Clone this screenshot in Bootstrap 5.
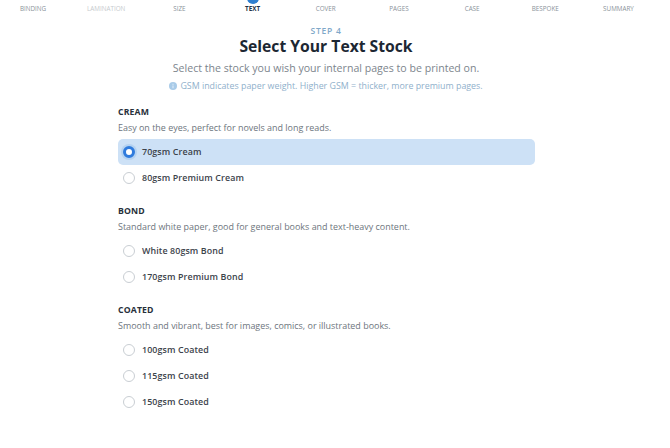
<!DOCTYPE html>
<html lang="en">
<head>
<meta charset="utf-8">
<title>Select Your Text Stock</title>
<link href="https://cdn.jsdelivr.net/npm/bootstrap@5.3.0/dist/css/bootstrap.min.css" rel="stylesheet">
<style>
html,body{height:448px;overflow:hidden}
body{font-family:"Open Sans","Noto Sans",sans-serif;background:#fff;color:#212b36}
.stepper-row{height:12px;width:670px;margin-left:-3.6px;position:relative}
.step-name{font-size:6.3px;color:#8a929a;text-transform:uppercase;line-height:12px;position:relative;flex:0 0 auto;width:73.2px;text-align:center;margin-top:3px}
.step-name.is-muted{color:#c6cace}
.step-name.is-current{color:#1f3247;font-weight:700}
.step-dot{position:absolute;left:50%;top:-11px;width:12px;height:12px;margin-left:-6px;border-radius:50%;background:#2f7fd0}
.intro{padding:14px 18px 0 0;text-align:center}
.step-kicker{font-size:8.5px;line-height:10px;height:10px;letter-spacing:.75px;font-weight:600;color:#7fa8c9;text-transform:uppercase}
.page-title{font-size:15.7px;line-height:18px;font-weight:700;color:#1c2733;margin:1px 0 0}
.page-sub{font-size:10.6px;line-height:15px;color:#7d858d;margin:5.5px 0 0}
.gsm-note{font-size:8.85px;line-height:14px;color:#8fb0cb;margin:3.5px 0 0}
.info-icon{width:8px;height:8px;vertical-align:-1px;margin-right:3px}
.stock-wrap{width:417px;margin:13px 0 0 118px}
.stock-group{margin-bottom:14px}
.stock-group h2{font-size:8.7px;line-height:12px;font-weight:700;color:#27303a;margin:0;letter-spacing:.15px}
.stock-group p{font-size:8.95px;line-height:12px;color:#6d757d;margin:4px 0 5px}
.stock-option{height:26px;display:flex;align-items:center;gap:7px;padding-left:6px;border-radius:5px;font-size:8.9px;font-weight:600;color:#3c434b;letter-spacing:.1px}
.stock-option.is-on{background:#cde1f6}
.stock-radio{width:12px;height:12px;border-radius:50%;border:1px solid #c9ced3;background:#fff;flex:none;margin-left:-1px}
.is-on .stock-radio{border:3px solid #2f7bdd;box-shadow:0 0 0 2px #b4d2f1}
</style>
</head>
<body>
<div class="d-flex stepper-row">
  <div class="step-name">Binding</div>
  <div class="step-name is-muted">Lamination</div>
  <div class="step-name">Size</div>
  <div class="step-name is-current"><span class="step-dot"></span>Text</div>
  <div class="step-name">Cover</div>
  <div class="step-name">Pages</div>
  <div class="step-name">Case</div>
  <div class="step-name">Bespoke</div>
  <div class="step-name">Summary</div>
</div>
<div class="intro">
  <div class="step-kicker">Step 4</div>
  <h1 class="page-title">Select Your Text Stock</h1>
  <p class="page-sub">Select the stock you wish your internal pages to be printed on.</p>
  <p class="gsm-note"><svg class="info-icon" viewBox="0 0 16 16" aria-hidden="true"><circle cx="8" cy="8" r="8" fill="#a9cbe8"/><rect x="7" y="7" width="2" height="5.5" fill="#e4eff9"/><rect x="7" y="3.6" width="2" height="2" fill="#e4eff9"/></svg>GSM indicates paper weight. Higher GSM = thicker, more premium pages.</p>
</div>
<div class="stock-wrap">
  <section class="stock-group">
    <h2>CREAM</h2>
    <p>Easy on the eyes, perfect for novels and long reads.</p>
    <div class="stock-option is-on"><span class="stock-radio"></span>70gsm Cream</div>
    <div class="stock-option"><span class="stock-radio"></span>80gsm Premium Cream</div>
  </section>
  <section class="stock-group">
    <h2>BOND</h2>
    <p>Standard white paper, good for general books and text-heavy content.</p>
    <div class="stock-option"><span class="stock-radio"></span>White 80gsm Bond</div>
    <div class="stock-option"><span class="stock-radio"></span>170gsm Premium Bond</div>
  </section>
  <section class="stock-group">
    <h2>COATED</h2>
    <p>Smooth and vibrant, best for images, comics, or illustrated books.</p>
    <div class="stock-option"><span class="stock-radio"></span>100gsm Coated</div>
    <div class="stock-option"><span class="stock-radio"></span>115gsm Coated</div>
    <div class="stock-option"><span class="stock-radio"></span>150gsm Coated</div>
  </section>
</div>
<script src="https://cdn.jsdelivr.net/npm/bootstrap@5.3.0/dist/js/bootstrap.bundle.min.js"></script>
</body>
</html>
